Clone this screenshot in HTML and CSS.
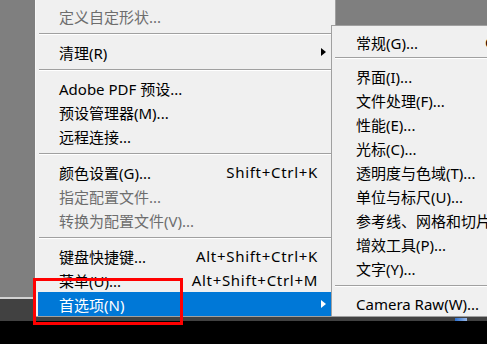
FILE: index.html
```html
<!DOCTYPE html>
<html lang="zh-CN">
<head>
<meta charset="UTF-8" />
<title>编辑菜单 - 首选项</title>
<link rel="stylesheet" href="styles.css">
</head>
<body>
  <div class="screen">
    <div class="workspace"></div>
    <div class="statusbar"><span class="progress"></span></div>
  </div>

  <ul class="menu main">
    <li class="item off"><span class="label">定义自定形状...</span></li>
    <li class="sep"></li>
    <li class="item has-sub"><span class="label">清理(R)</span><span class="arrow"></span></li>
    <li class="sep"></li>
    <li class="item"><span class="label">Adobe PDF 预设...</span></li>
    <li class="item"><span class="label">预设管理器(M)...</span></li>
    <li class="item"><span class="label">远程连接...</span></li>
    <li class="sep"></li>
    <li class="item"><span class="label">颜色设置(G)...</span><span class="key">Shift+Ctrl+K</span><span class="arrow"></span></li>
    <li class="item off"><span class="label">指定配置文件...</span></li>
    <li class="item off"><span class="label">转换为配置文件(V)...</span></li>
    <li class="sep"></li>
    <li class="item"><span class="label">键盘快捷键...</span><span class="key">Alt+Shift+Ctrl+K</span><span class="arrow"></span></li>
    <li class="item"><span class="label">菜单(U)...</span><span class="key">Alt+Shift+Ctrl+M</span><span class="arrow"></span></li>
    <li class="item has-sub active"><span class="label">首选项(N)</span><span class="arrow"></span></li>
  </ul>

  <ul class="menu sub">
    <li class="item"><span class="label">常规(G)...</span><span class="key">Ctrl+K</span></li>
    <li class="sep first"></li>
    <li class="item"><span class="label">界面(I)...</span></li>
    <li class="item"><span class="label">文件处理(F)...</span></li>
    <li class="item"><span class="label">性能(E)...</span></li>
    <li class="item"><span class="label">光标(C)...</span></li>
    <li class="item"><span class="label">透明度与色域(T)...</span></li>
    <li class="item"><span class="label">单位与标尺(U)...</span></li>
    <li class="item"><span class="label">参考线、网格和切片(S)...</span></li>
    <li class="item"><span class="label">增效工具(P)...</span></li>
    <li class="item"><span class="label">文字(Y)...</span></li>
    <li class="sep"></li>
    <li class="item"><span class="label">Camera Raw(W)...</span></li>
  </ul>

  <div class="callout"></div>
</body>
</html>
```

FILE: styles.css
```css
body {
  margin: 0;
  width: 487px;
  height: 344px;
  overflow: hidden;
  position: relative;
  background: #000;
  font-family: "Noto Sans", "Noto Sans CJK SC", sans-serif;
  font-size: 15px;
}

.screen {
  height: 321px;
  display: flex;
  flex-direction: column;
  background: #7f7f7f;
}

.workspace {
  flex: 1;
}

.statusbar {
  height: 22px;
  border-top: 2px solid #d2d2d2;
  background: #414141;
  display: flex;
  align-items: flex-end;
}

.progress {
  margin-left: 455px;
  width: 12px;
  height: 3px;
  background: linear-gradient(to right, #2a6fd0, #9ab8e6);
}

.menu {
  position: absolute;
  margin: 0;
  list-style: none;
  background: #f0f0f0;
  border: 1px solid #a0a0a0;
  box-sizing: border-box;
}

.main {
  left: 35px;
  top: -4px;
  width: 301px;
  padding: 7px 2px 0;
  border-left-color: #f7f7f7;
}

.sub {
  left: 331px;
  top: 25px;
  width: 200px;
  padding: 4px 2px 0;
}

.item {
  display: flex;
  align-items: center;
  height: 24px;
  padding-left: 21px;
  white-space: nowrap;
  color: #000;
}

.sub .item {
  padding-left: 22px;
}

.sub .label {
  width: 129px;
  flex: none;
}

.item.off {
  color: #6d6d6d;
}

.item.active {
  background: #0078d7;
  color: #fff;
}

.key {
  margin-left: auto;
  letter-spacing: 0.7px;
}

.arrow {
  width: 15px;
  flex: none;
  margin-left: auto;
}

.key + .arrow {
  margin-left: 0;
}

.has-sub .arrow::before {
  content: "";
  display: block;
  margin-left: 3px;
  width: 0;
  height: 0;
  border-left: 5px solid #000;
  border-top: 4px solid transparent;
  border-bottom: 4px solid transparent;
}

.active .arrow::before {
  border-left-color: #fff;
}

.sep {
  margin: 5px 1px;
  border-top: 1px solid #a0a0a0;
  border-bottom: 1px solid #fff;
}

.sep.first {
  margin: 3px 1px 5px;
}

.callout {
  position: absolute;
  left: 33px;
  top: 278px;
  width: 150px;
  height: 47px;
  box-sizing: border-box;
  border: 3px solid #f00;
}
```
